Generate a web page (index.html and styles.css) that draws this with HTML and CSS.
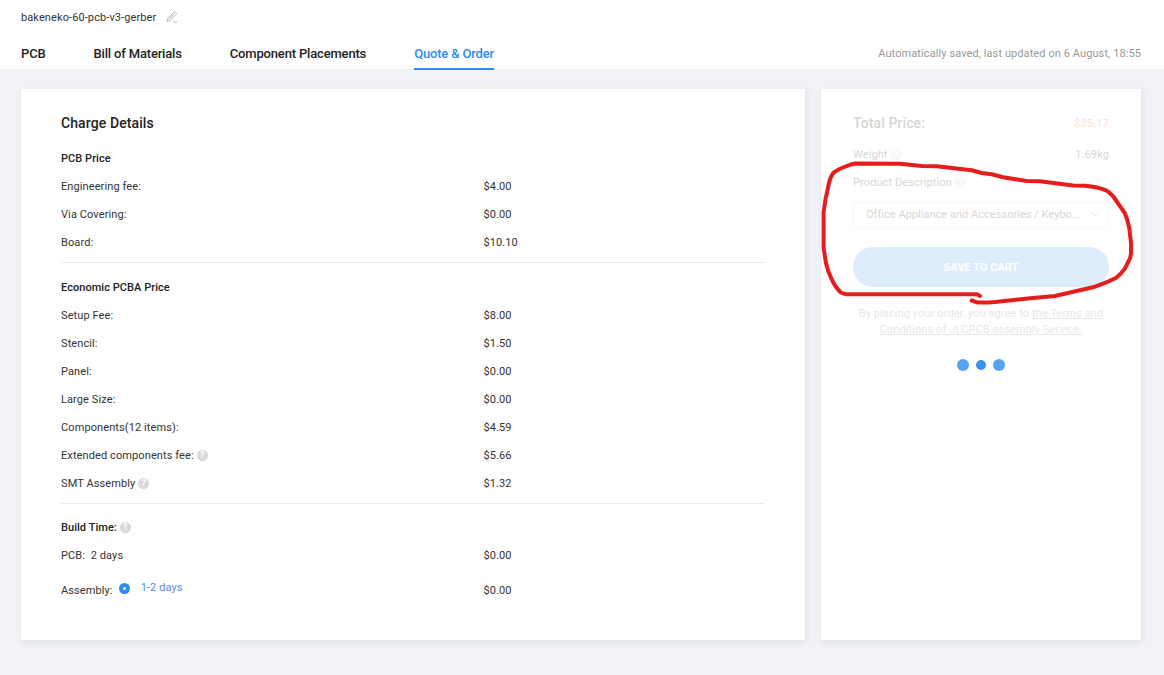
FILE: index.html
```html
<!DOCTYPE html>
<html lang="en">
<head>
  <meta charset="UTF-8">
  <meta name="viewport" content="width=device-width, initial-scale=1.0">
  <title>Quote &amp; Order</title>
  <link rel="stylesheet" href="styles.css">
</head>
<body>
  <!-- Header -->
  <header class="header">
    <div class="file-name">
      <span>bakeneko-60-pcb-v3-gerber</span>
      <svg class="edit-icon" viewBox="0 0 12 12">
        <path d="M1.2 10.6 1.9 7.5 7.6 1.4Q8.7.4 9.8 1.3 10.8 2.3 9.9 3.4L4.2 9.4ZM3.6 7.6 7.8 3.2M7 11H11"/>
      </svg>
    </div>
    <div class="nav-row">
      <nav class="tabs">
        <a class="tab">PCB</a>
        <a class="tab">Bill of Materials</a>
        <a class="tab">Component Placements</a>
        <a class="tab active">Quote &amp; Order</a>
      </nav>
      <span class="saved">Automatically saved, last updated on 6 August, 18:55</span>
    </div>
  </header>

  <main class="content">
    <!-- Charge Details -->
    <section class="card charges">
      <h2>Charge Details</h2>

      <div class="group">
        <h3>PCB Price</h3>
        <div class="row"><span>Engineering fee:</span><span>$4.00</span></div>
        <div class="row"><span>Via Covering:</span><span>$0.00</span></div>
        <div class="row"><span>Board:</span><span>$10.10</span></div>
      </div>

      <div class="group">
        <h3>Economic PCBA Price</h3>
        <div class="row"><span>Setup Fee:</span><span>$8.00</span></div>
        <div class="row"><span>Stencil:</span><span>$1.50</span></div>
        <div class="row"><span>Panel:</span><span>$0.00</span></div>
        <div class="row"><span>Large Size:</span><span>$0.00</span></div>
        <div class="row"><span>Components(12 items):</span><span>$4.59</span></div>
        <div class="row"><span class="label">Extended components fee:<i class="help">?</i></span><span>$5.66</span></div>
        <div class="row"><span class="label">SMT Assembly<i class="help">?</i></span><span>$1.32</span></div>
      </div>

      <div class="group build">
        <h3 class="label">Build Time:<i class="help">?</i></h3>
        <div class="row"><span>PCB:&nbsp; 2 days</span><span>$0.00</span></div>
        <div class="row assembly">
          <span class="label">Assembly:<span class="option"><i class="radio"></i>1-2 days</span></span>
          <span>$0.00</span>
        </div>
      </div>
    </section>

    <!-- Order summary, faded while the price loads -->
    <aside class="card summary">
      <div class="faded">
        <div class="line total"><span>Total Price:</span><span class="price">$35.17</span></div>
        <div class="line weight"><span class="label">Weight<i class="help">?</i></span><span>1.69kg</span></div>
        <div class="line"><span class="label">Product Description<i class="help">?</i></span></div>
        <div class="select">
          <span>Office Appliance and Accessories / Keybo...</span>
          <svg class="chevron" viewBox="0 0 10 6"><path d="M1 1 5 5 9 1"/></svg>
        </div>
        <button class="save" type="button">SAVE TO CART</button>
        <p class="terms">By placing your order, you agree to <u>the Terms and Conditions of JLCPCB assembly Service.</u></p>
      </div>
      <div class="loader"><i></i><i></i><i></i></div>
    </aside>
  </main>

  <!-- Hand-drawn marker -->
  <svg class="marker" viewBox="0 0 1164 675">
    <path d="M980 296 977 294.3H849Q843 294.3 840 291.7 835 287 831.7 279.3 828 272 826 263.3L823.6 248V212L825.7 198.3 829.3 181.7Q831.5 174 834.5 172 837 170 841.7 168L850 164.8 855 163.5 900 163.7 921.7 166 936.7 166.3 971.7 170.3 981.7 173 991.7 174.3 1003 177.3 1026.7 181 1040 181.3 1073 185.6 1085 185.7Q1098 187 1106 190.3 1110 192.5 1113.3 196.5L1125 213.3 1127.3 220 1129.3 228.3 1131 243V253L1130.3 257.7 1125 268.3Q1121 274 1116 278 1106 283 1093 287.3L1073.3 291.7 1055 296 1030 298.3 995 302Q982 303 976.7 302.3L971.7 300.5"/>
  </svg>
</body>
</html>
```
FILE: styles.css
```css
/* General Styles */
* {
  box-sizing: border-box;
}

body {
  margin: 0;
  min-height: 675px;
  background-color: #f1f2f6;
  color: #333;
  font-family: Roboto, sans-serif;
  font-size: 11px;
  letter-spacing: 0.1px;
}

/* Header */
.header {
  height: 69px;
  padding: 0 23px 0 21px;
  background-color: #fff;
}

.file-name {
  display: flex;
  align-items: center;
  gap: 10px;
  height: 34px;
}

.edit-icon {
  width: 12px;
  height: 12px;
  fill: none;
  stroke: #b5b5b5;
}

.nav-row {
  display: flex;
  justify-content: space-between;
  height: 36px;
}

.tabs {
  display: flex;
  gap: 48px;
}

.tab {
  height: 36px;
  line-height: 39px;
  font-size: 13px;
  font-weight: 500;
  letter-spacing: -0.17px;
  color: #222;
}

.tab.active {
  color: #2d8cf0;
  border-bottom: 2px solid #2d8cf0;
}

.saved {
  line-height: 40px;
  letter-spacing: 0.09px;
  color: #999;
}

/* Cards */
.content {
  display: flex;
  gap: 16px;
  padding: 20px 23px 35px 21px;
}

.card {
  height: 551px;
  background-color: #fff;
  box-shadow: 2px 2px 6px rgba(70, 80, 130, 0.1);
}

.charges {
  width: 784px;
  padding: 20px 40px;
}

h2 {
  margin: 0 0 8px;
  font-size: 14px;
  line-height: 28px;
  font-weight: 500;
  letter-spacing: 0.1px;
  color: #222;
}

h3 {
  margin: 0;
  font-size: 11px;
  line-height: 28px;
  font-weight: 500;
  letter-spacing: 0.05px;
  color: #222;
}

.group + .group {
  margin-top: 5px;
  padding-top: 11px;
  border-top: 1px solid #ebebeb;
}

.group + .build {
  padding-top: 10px;
}

.row {
  display: grid;
  grid-template-columns: 60% 40%;
  line-height: 28px;
}

.label {
  display: flex;
  align-items: center;
}

.help {
  width: 11px;
  height: 11px;
  margin: 0 0 1px 3px;
  border-radius: 50%;
  background-color: #d8d8d8;
  color: #fff;
  font-size: 9px;
  font-style: normal;
  font-weight: 700;
  line-height: 11px;
  letter-spacing: 0;
  text-align: center;
}

.assembly {
  padding-top: 7px;
}

.option {
  display: flex;
  align-items: center;
  margin-left: 6px;
  padding-bottom: 6px;
  line-height: 22px;
  color: #5b86ea;
}

.radio {
  width: 11px;
  height: 11px;
  margin-right: 11px;
  border: 4px solid #2d8cf0;
  border-radius: 50%;
}

/* Order summary */
.summary {
  width: 320px;
  padding: 20px 32px;
}

.faded {
  opacity: 0.2;
}

.line {
  display: flex;
  justify-content: space-between;
  line-height: 28px;
}

.total {
  margin-bottom: 3px;
  font-size: 14px;
  font-weight: 500;
  letter-spacing: 0.1px;
}

.total .price {
  padding-top: 1px;
  font-size: 11px;
  color: #ff7733;
}

.select {
  display: flex;
  align-items: center;
  justify-content: space-between;
  height: 26px;
  margin-top: 5px;
  padding: 0 8px 2px 12px;
  border: 1px solid #d5d5d5;
  border-radius: 3px;
  letter-spacing: 0.03px;
  white-space: nowrap;
}

.chevron {
  width: 10px;
  height: 6px;
  fill: none;
  stroke: #999;
}

.save {
  display: block;
  width: 100%;
  height: 40px;
  margin-top: 19px;
  border: none;
  border-radius: 20px;
  background-color: #5aa9f2;
  color: #fff;
  font-family: inherit;
  font-size: 11px;
  font-weight: 700;
}

.terms {
  margin: 19px 0 0;
  line-height: 16px;
  text-align: center;
  color: #888;
}

.loader {
  display: flex;
  align-items: center;
  justify-content: center;
  gap: 7px;
  margin-top: 21px;
}

.loader i {
  width: 12px;
  height: 12px;
  border-radius: 50%;
  background-color: #57a3f3;
}

.loader i:nth-child(2) {
  width: 10px;
  height: 10px;
  background-color: #3a92f1;
}

/* Marker drawn over the page */
.marker {
  position: absolute;
  top: 0;
  left: 0;
  width: 1164px;
  height: 675px;
  fill: none;
  stroke: #e81c1c;
  stroke-width: 4;
  stroke-linecap: round;
  stroke-linejoin: round;
  pointer-events: none;
}
```
